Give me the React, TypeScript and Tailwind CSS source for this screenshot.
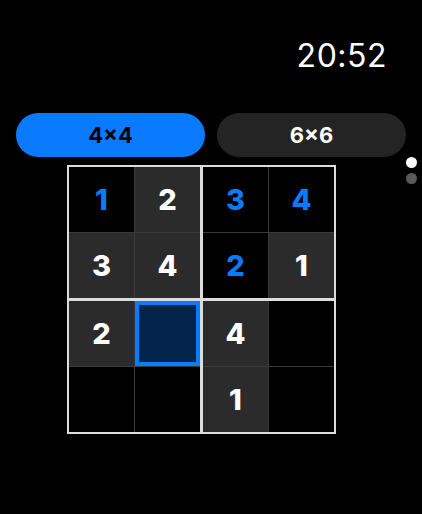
import React from 'react';

type Cell = { v?: number; given?: boolean; shade?: boolean; selected?: boolean };

// rows of the 4x4 board
const board: Cell[][] = [
  [{ v: 1, given: true }, { v: 2, shade: true }, { v: 3, given: true }, { v: 4, given: true }],
  [{ v: 3, shade: true }, { v: 4, shade: true }, { v: 2, given: true }, { v: 1, shade: true }],
  [{ v: 2, shade: true }, { selected: true }, { v: 4, shade: true }, {}],
  [{}, {}, { v: 1, shade: true }, {}],
];

const CellBox = ({ cell }: { cell: Cell }) => {
  if (cell.selected) {
    return <div className="w-[65px] h-[65px] bg-[#02234a] border-[4px] border-[#0a7aff]" />;
  }
  return (
    <div
      className={`w-[65px] h-[65px] flex items-center justify-center text-[29px] font-extrabold leading-none ${
        cell.shade ? 'bg-[#2b2b2b]' : 'bg-black'
      } ${cell.given ? 'text-[#0a7aff]' : 'text-white'}`}
    >
      {cell.v}
    </div>
  );
};

const Block = ({ r, c }: { r: number; c: number }) => (
  <div className="grid grid-cols-2 gap-px bg-[#3a3a3a]">
    {[0, 1].map((dr) =>
      [0, 1].map((dc) => <CellBox key={`${dr}-${dc}`} cell={board[r + dr][c + dc]} />)
    )}
  </div>
);

export default function App() {
  return (
    <div
      className="w-[422px] h-[514px] bg-black text-white relative overflow-hidden"
      style={{ fontFamily: 'Inter, "Noto Sans", sans-serif' }}
    >
      <div className="flex justify-end pr-[35px] pt-[36px] h-[113px]">
        <span className="text-[32px] leading-[40px] font-normal tracking-[0.5px]">20:52</span>
      </div>

      <div className="flex gap-3 px-4">
        <button className="w-[189px] h-[44px] rounded-[22px] bg-[#0a7aff] text-black text-[22px] font-bold">
          4×4
        </button>
        <button className="w-[189px] h-[44px] rounded-[22px] bg-[#242424] text-white text-[22px] font-bold">
          6×6
        </button>
      </div>

      <div className="flex pl-[67px] pt-[8px]">
        <div className="grid grid-cols-2 gap-[3px] bg-[#dcdcdc] p-[2px]">
          <Block r={0} c={0} />
          <Block r={0} c={2} />
          <Block r={2} c={0} />
          <Block r={2} c={2} />
        </div>
      </div>

      {/* page dots */}
      <div className="absolute left-[406px] top-[157px] flex flex-col gap-[5px]">
        <div className="w-[11px] h-[11px] rounded-full bg-white" />
        <div className="w-[11px] h-[11px] rounded-full bg-[#5a5a5a]" />
      </div>
    </div>
  );
}
